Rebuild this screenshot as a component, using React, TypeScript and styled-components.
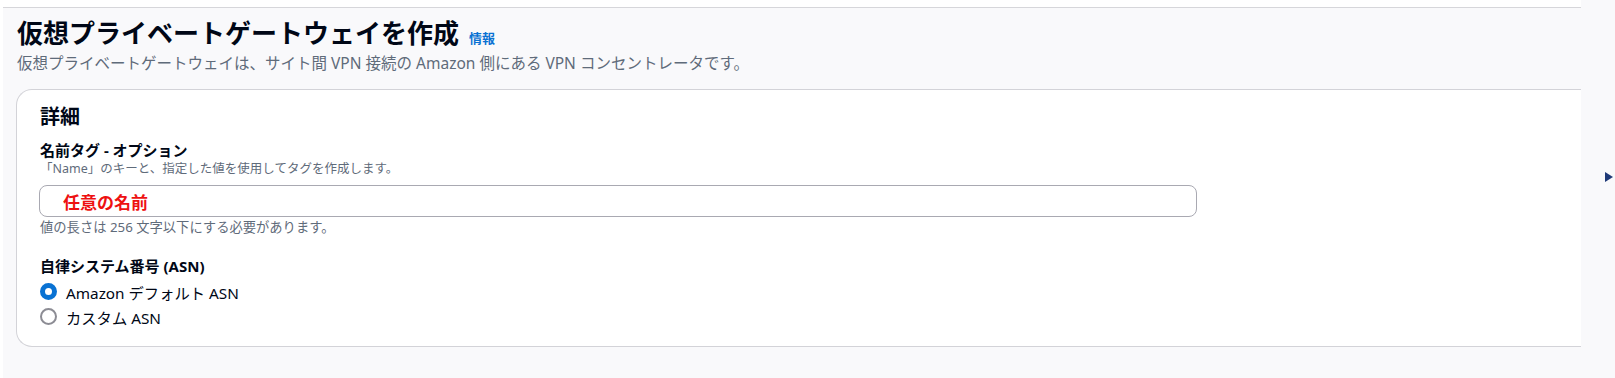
import React, { useState } from 'react';
import styled, { createGlobalStyle } from 'styled-components';

const GlobalStyle = createGlobalStyle`
  html, body {
    margin: 0;
    padding: 0;
    background: #ffffff;
  }
  body {
    font-family: 'Noto Sans', 'Noto Sans CJK JP', sans-serif;
    color: #000716;
  }
`;

const Page = styled.div`
  width: 1615px;
  height: 378px;
  display: flex;
  overflow: hidden;
  background: #ffffff;
`;

const Main = styled.main`
  width: 1578px;
  margin-left: 3px;
  display: flex;
  flex-direction: column;
  background: #f9f9fb;
`;

const TopStrip = styled.div`
  height: 7px;
  background: #ffffff;
  border-bottom: 1.5px solid #d6d6da;
`;

const Header = styled.header`
  padding: 8px 0 0 14px;
  height: 81px;
  box-sizing: border-box;
`;

const TitleRow = styled.div`
  display: flex;
  align-items: baseline;
  gap: 10px;
`;

const Title = styled.h1`
  margin: 0;
  font-size: 26px;
  line-height: 34px;
  font-weight: 700;
  color: #000716;
`;

const InfoLink = styled.a`
  font-size: 13px;
  font-weight: 700;
  color: #0972d3;
  text-decoration: none;
  cursor: pointer;
`;

const Subtitle = styled.p`
  margin: 2px 0 0;
  font-size: 15.5px;
  line-height: 22px;
  color: #5f6b7a;
`;

const Card = styled.section`
  margin-left: 13px;
  height: 258px;
  box-sizing: border-box;
  background: #ffffff;
  border: 1.5px solid #d3d3d8;
  border-right: none;
  border-radius: 16px 0 0 16px;
  padding: 12px 24px 0 23px;
`;

const CardTitle = styled.h2`
  margin: 0;
  font-size: 20px;
  line-height: 30px;
  font-weight: 700;
  color: #000716;
`;

const Field = styled.div<{ $top: number }>`
  display: flex;
  flex-direction: column;
  margin-top: ${(p) => p.$top}px;
`;

const Label = styled.label`
  font-size: 15px;
  line-height: 20px;
  font-weight: 700;
  color: #000716;
`;

const Hint = styled.span<{ $size: number }>`
  font-size: ${(p) => p.$size}px;
  line-height: 18px;
  color: #5f6b7a;
`;

const TextInput = styled.input`
  width: 1158px;
  height: 32px;
  box-sizing: border-box;
  margin: 7px 0 1px -1px;
  padding: 0 0 0 23px;
  border: 1.5px solid #a9a9b2;
  border-radius: 8px;
  font-family: 'Noto Sans', 'Noto Sans CJK JP', sans-serif;
  font-size: 17px;
  font-weight: 700;
  color: #ee1111;
  outline: none;
  background: #ffffff;
`;

const RadioGroup = styled.div`
  display: flex;
  flex-direction: column;
  margin-top: 3px;
`;

const RadioRow = styled.label`
  display: flex;
  align-items: center;
  gap: 9px;
  height: 25px;
  font-size: 15.3px;
  color: #000716;
  cursor: pointer;
`;

const RadioDot = styled.span<{ $checked: boolean }>`
  width: 17px;
  height: 17px;
  box-sizing: border-box;
  border-radius: 50%;
  background: #ffffff;
  border: ${(p) => (p.$checked ? '5px solid #0972d3' : '2px solid #8c8c94')};
`;

const SidePanel = styled.aside`
  flex: 1;
  background: #f9f9fb;
  padding: 172px 0 0 24px;
  box-sizing: border-box;
`;

const Triangle = styled.span`
  display: block;
  width: 0;
  height: 0;
  border-top: 5.5px solid transparent;
  border-bottom: 5.5px solid transparent;
  border-left: 8px solid #1f3a78;
`;

const options = [
  { id: 'amazon', label: 'Amazon デフォルト ASN' },
  { id: 'custom', label: 'カスタム ASN' },
];

const App = () => {
  const [name, setName] = useState('任意の名前');
  const [asn, setAsn] = useState('amazon');

  return (
    <Page>
      <GlobalStyle />
      <Main>
        <TopStrip />
        <Header>
          <TitleRow>
            <Title>仮想プライベートゲートウェイを作成</Title>
            <InfoLink>情報</InfoLink>
          </TitleRow>
          <Subtitle>
            仮想プライベートゲートウェイは、サイト間 VPN 接続の Amazon 側にある VPN コンセントレータです。
          </Subtitle>
        </Header>
        <Card>
          <CardTitle>詳細</CardTitle>
          <Field $top={8}>
            <Label>名前タグ - オプション</Label>
            <Hint $size={12.5}>「Name」のキーと、指定した値を使用してタグを作成します。</Hint>
            <TextInput value={name} onChange={(e) => setName(e.target.value)} />
            <Hint $size={13.3}>値の長さは 256 文字以下にする必要があります。</Hint>
          </Field>
          <Field $top={20}>
            <Label>自律システム番号 (ASN)</Label>
            <RadioGroup>
              {options.map((o) => (
                <RadioRow key={o.id} onClick={() => setAsn(o.id)}>
                  <RadioDot $checked={asn === o.id} />
                  {o.label}
                </RadioRow>
              ))}
            </RadioGroup>
          </Field>
        </Card>
      </Main>
      <SidePanel>
        <Triangle />
      </SidePanel>
    </Page>
  );
};

export default App;
